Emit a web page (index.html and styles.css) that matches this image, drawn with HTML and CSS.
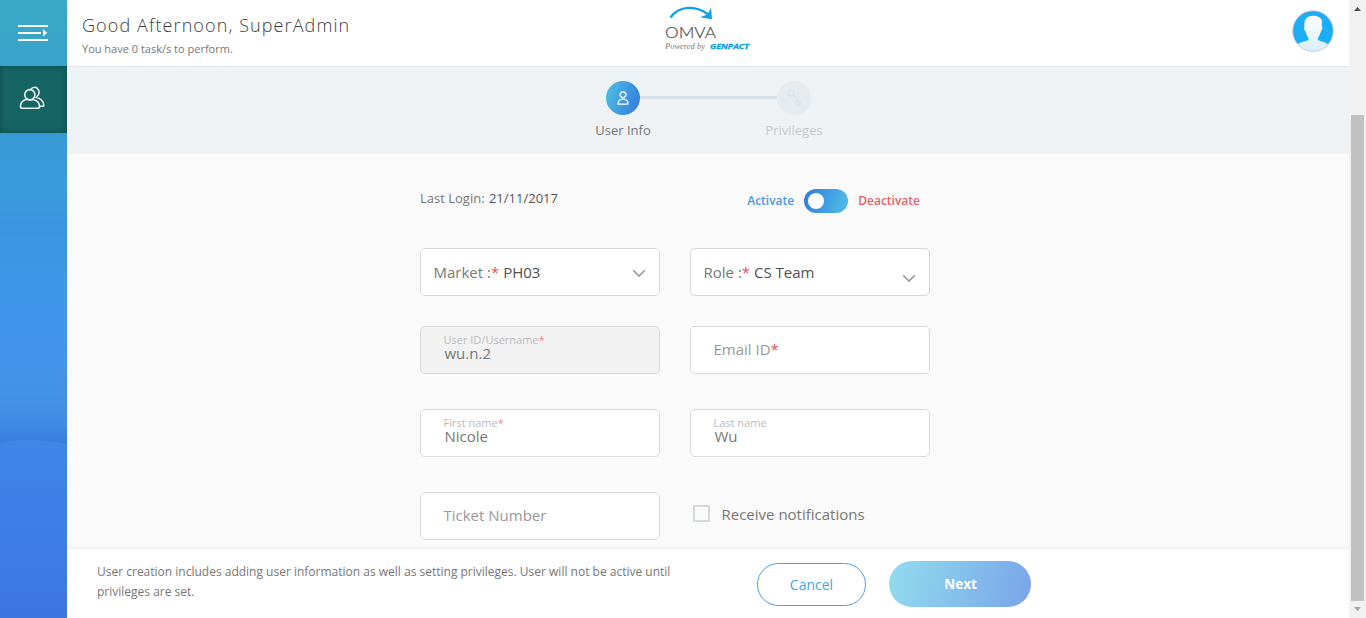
FILE: index.html
```html
<!DOCTYPE html>
<html lang="en">
<head>
<meta charset="utf-8">
<title>OMVA - User Info</title>
<link rel="stylesheet" href="styles.css">
</head>
<body>
<div class="app">
  <nav class="sidebar">
    <svg class="side-bg" width="67" height="618" viewBox="0 0 67 618">
      <defs>
        <linearGradient id="sky" x1="0" y1="0" x2="0" y2="1">
          <stop offset="0" stop-color="#38aac4"/><stop offset=".107" stop-color="#38a2cc"/>
          <stop offset=".22" stop-color="#389ad5"/><stop offset=".31" stop-color="#3a9cdc"/>
          <stop offset=".36" stop-color="#3c94e0"/><stop offset=".46" stop-color="#3f97ea"/>
          <stop offset=".55" stop-color="#4394ee"/><stop offset=".64" stop-color="#4591e9"/>
          <stop offset=".69" stop-color="#3f8ae4"/><stop offset=".715" stop-color="#387ddd"/>
        </linearGradient>
        <linearGradient id="hill" x1="0" y1="0" x2="0" y2="1">
          <stop offset="0" stop-color="#3e86e8"/><stop offset=".5" stop-color="#3d7ee7"/><stop offset="1" stop-color="#3c76e1"/>
        </linearGradient>
      </defs>
      <rect width="67" height="618" fill="url(#sky)"/>
      <path d="M0 442Q32 437 67 444V618H0Z" fill="url(#hill)"/>
    </svg>
    <div class="menu-toggle">
      <svg width="30" height="17" viewBox="0 0 30 17" fill="#fff"><path d="M0 0h30v2H0zM0 7h23v2H0zM0 14h30v2H0zM25 4.3l4.3 3.5L25 11.5z"/></svg>
    </div>
    <div class="side-item">
      <svg width="26" height="24" viewBox="0 0 26 24" fill="none" stroke="#e9f3f3" stroke-width="1.6" stroke-linejoin="round">
        <circle cx="10.8" cy="8.700" r="5.100"/>
        <path d="M7.500 13.200C3.200 14.300 1.500 17 1.500 20.500q0 1.800 1.800 1.800h15.400q1.800 0 1.800-1.800c0-3.500-2-6-6.200-7.100M7.500 13.200Q11 14.600 14.300 13.400M11.500 3.400C13.500 1 16.500.9 18.300 2.300c2.800 2.300 2.200 6.700-.7 8.400M16.200 11.300c5.200.5 8.600 3.900 8.600 8.200q0 .8-1 .8h-3"/>
      </svg>
    </div>
  </nav>
  <main class="main">
    <header class="header">
      <div class="greeting">
        <h1 class="hello">Good Afternoon, SuperAdmin</h1>
        <p class="tasks">You have 0 task/s to perform.</p>
      </div>
      <svg class="logo" width="90" height="50" viewBox="0 0 90 50">
        <path d="M5.500 15.500C14 3.500 31 3 43 12.500" fill="none" stroke="#0aa1e8" stroke-width="2.300"/>
        <path d="M46 5.500L47 17.300L35 15.300L42.500 12.500Z" fill="#0aa1e8"/>
        <text class="logo-name" x="0" y="36" textLength="51" lengthAdjust="spacingAndGlyphs">OMVA</text>
        <text class="logo-by" x="0" y="46.500" textLength="40" lengthAdjust="spacingAndGlyphs">Powered by</text>
        <text class="logo-brand" x="45" y="46.500" textLength="39" lengthAdjust="spacingAndGlyphs">GENPACT</text>
      </svg>
      <svg class="avatar" width="42" height="42" viewBox="0 0 42 42">
        <defs><clipPath id="face"><circle cx="21" cy="21" r="20"/></clipPath>
        <linearGradient id="skin" x1="0" y1="0" x2="0" y2="1"><stop offset="0" stop-color="#fff"/><stop offset="1" stop-color="#d6effc"/></linearGradient></defs>
        <circle cx="21" cy="21" r="20.300" fill="#1badf6" stroke="#ccc" stroke-width="1"/>
        <path clip-path="url(#face)" fill="url(#skin)" d="M17 6.500C21 5 27.500 5.500 29.500 9.500C30.300 12 30 15 29.800 16.500C31 17 30.300 20 29 21C28.500 24 27 26 26 28C25.500 30.500 27 31 30 31.500C34 32.500 36.500 34 38 37V42H3V37C5 34 8 32.500 12 31.500C15.500 31 17 30.500 16.500 28C15 26 14 24 13.500 21C12 20 11.500 17.500 12.500 16.500C12 12 13 8 17 6.500Z"/>
      </svg>
    </header>
    <section class="steps">
      <div class="step">
        <div class="step-dot active">
          <svg width="12" height="14" viewBox="0 0 12 14" fill="none" stroke="#fff" stroke-width="1.3"><circle cx="6" cy="3.700" r="2.900"/><path d="M1 13.100C1 9.800 3 8.200 6 8.200S11 9.800 11 13.100Z" stroke-linejoin="round"/></svg>
        </div>
        <span class="step-label">User Info</span>
      </div>
      <div class="step-line"></div>
      <div class="step pending">
        <div class="step-dot">
          <svg width="15" height="18" viewBox="0 0 15 18" fill="none" stroke="#d9e4ec" stroke-width="1.500"><circle cx="4" cy="4" r="3"/><path d="M6 6.200L14 14.500M10.700 11.300L8.500 13.500M13.500 14L10.700 16.800"/></svg>
        </div>
        <span class="step-label">Privileges</span>
      </div>
    </section>
    <section class="form">
      <div class="meta">
        <div class="last-login">Last Login: <span>21/11/2017</span></div>
        <div class="status"><span class="on">Activate</span><i class="switch"></i><span class="off">Deactivate</span></div>
      </div>
      <div class="field select"><span class="sel-text">Market :<b>*</b> <em>PH03</em></span>
        <svg width="14" height="9" viewBox="0 0 14 9"><path d="M1.200 1.300L7 7.100L12.800 1.300"/></svg></div>
      <div class="field select low"><span class="sel-text">Role :<b>*</b> <em>CS Team</em></span>
        <svg width="14" height="9" viewBox="0 0 14 9"><path d="M1.200 1.300L7 7.100L12.800 1.300"/></svg></div>
      <div class="field disabled"><label>User ID/Username<b>*</b></label><span class="value">wu.n.2</span></div>
      <div class="field"><span class="holder">Email ID<b>*</b></span></div>
      <div class="field"><label>First name<b>*</b></label><span class="value">Nicole</span></div>
      <div class="field"><label>Last name</label><span class="value">Wu</span></div>
      <div class="field"><span class="holder">Ticket Number</span></div>
      <div class="check"><i class="box"></i><span>Receive notifications</span></div>
    </section>
    <footer class="footer">
      <p class="note">User creation includes adding user information as well as setting privileges. User will not be active until<br>privileges are set.</p>
      <div class="btn cancel"><span>Cancel</span></div>
      <div class="btn next"><span>Next</span></div>
    </footer>
  </main>
  <div class="scrollbar">
    <svg class="arrow" width="7" height="4" viewBox="0 0 7 4" fill="#505050"><path d="M0 4L3.500 0L7 4Z"/></svg>
    <div class="thumb"></div>
    <svg class="arrow" width="7" height="4" viewBox="0 0 7 4" fill="#a3a3a3"><path d="M0 0L3.500 4L7 0Z"/></svg>
  </div>
</div>
</body>
</html>
```
FILE: styles.css
```css
* { box-sizing: border-box; }
body { margin: 0; overflow: hidden; font-family: "Open Sans", "Noto Sans", sans-serif; color: #777; }
h1, p { margin: 0; font-weight: 400; }
b, em, i { font-style: normal; font-weight: 400; }
b { color: #ea5156; }
svg { display: block; }
.app { display: flex; width: 1366px; height: 618px; white-space: nowrap; }
.sidebar { position: relative; width: 67px; flex: none; }
.side-bg { position: absolute; left: 0; top: 0; }
.menu-toggle { position: relative; height: 66px; padding: 25px 0 0 18px; }
.side-item { position: relative; height: 67px; padding: 20px 0 0 19px; background: #166464; box-shadow: inset 0 0 6px #0c4c4c; }
.main { width: 1282px; flex: none; display: flex; flex-direction: column; background: #fafafa; }

.header { height: 67px; flex: none; display: flex; background: #fff; border-bottom: 1px solid #e4e6e8; padding-left: 15px; }
.greeting { width: 583px; padding-top: 13px; }
.hello { font-size: 18px; line-height: 25px; font-weight: 300; letter-spacing: 1.1px; color: #3c3c3c; }
.tasks { font-size: 11px; line-height: 16px; margin-top: 3px; color: #777; }
.logo { margin-top: 2px; }
.logo-name { font: 300 16px Lato, sans-serif; fill: #555; stroke: #555; stroke-width: .25; }
.logo-by { font: italic 9px "Liberation Serif", serif; fill: #777; }
.logo-brand { font: italic 700 7.5px "Open Sans", sans-serif; fill: #0aa1e8; stroke: #0aa1e8; stroke-width: .3; }
.avatar { margin: 10px 15px 0 auto; }

.steps { height: 87px; flex: none; display: flex; justify-content: center; padding: 14px 0 0 1px; background: #eef2f5; }
.step { width: 34px; display: flex; flex-direction: column; align-items: center; }
.step-dot { width: 34px; height: 34px; border-radius: 50%; background: #e6ebef; display: flex; align-items: center; justify-content: center; }
.step-dot.active { background: linear-gradient(110deg, #50c2e2, #3378de); }
.step-line { width: 137px; height: 3px; margin-top: 15px; background: #d6e0e8; }
.step-label { margin-top: 6px; font-size: 13px; line-height: 18px; color: #777; }
.pending .step-label { color: #c5c9cc; }

.form { width: 510px; height: 394px; flex: none; margin-left: 353px; display: grid; grid-template-columns: 240px 240px; column-gap: 30px; grid-template-rows: 94px 78px 83px 83px 48px; align-content: start; }
.meta { grid-column: 1 / 3; display: flex; justify-content: space-between; }
.last-login { padding-top: 35px; font-size: 13px; line-height: 18px; }
.last-login span { margin-left: 1px; color: #555; }
.status { display: flex; align-items: center; height: 24px; margin: 35px 10px 0 0; font-size: 12px; line-height: 16px; font-weight: 600; }
.on { color: #4a98e2; }
.off { color: #e0636b; }
.switch { width: 44px; height: 24px; border-radius: 12px; margin: 0 10px; background: linear-gradient(110deg, #3179de, #50c2e6); padding: 4px; }
.switch::before { content: ""; display: block; width: 16px; height: 16px; border-radius: 50%; background: #fff; }

.field { height: 48px; border: 1px solid #d9d9d9; border-radius: 5px; background: #fff; padding: 6px 22.5px 0; font-size: 15px; }
.field.select { display: flex; justify-content: space-between; padding: 0 13px 0 12.5px; }
.sel-text { line-height: 46px; }
.sel-text em { color: #4f4f4f; }
.select svg { margin-top: 20px; fill: none; stroke: #999; stroke-width: 1.600; }
.low svg { margin-top: 25px; }
.disabled { background: #f2f2f2; }
.field label { display: block; font-size: 11px; line-height: 13px; color: #bbb; }
.field label b { color: #f58a8a; }
.value { display: block; margin-left: 1px; line-height: 14px; }
.holder { display: block; line-height: 32px; color: #999; }
.check { display: flex; align-items: flex-start; padding: 12px 0 0 3px; font-size: 15px; line-height: 20px; }
.check .box { margin-top: 1px; }
.box { width: 17px; height: 17px; margin-right: 11.5px; border: 2px solid #d3dada; }

.footer { height: 70px; flex: none; background: #fff; border-top: 1px solid #f0f0f0; box-shadow: 0 -1px 2px #f0f0f0; display: flex; padding-left: 30px; }
.note { width: 660px; padding-top: 13px; font-size: 12px; line-height: 20px; }
.btn { display: flex; align-items: center; justify-content: center; border-radius: 23px; }
.cancel { width: 109px; height: 43px; margin-top: 14px; border: 1px solid #489fe0; color: #489fe0; font-size: 14px; }
.next { width: 142px; height: 46px; margin: 12px 0 0 23px; padding: 0 0 0 1px; background: linear-gradient(105deg, #92dcee, #79a4e9); color: #fff; font-size: 13.5px; font-weight: 700; }

.scrollbar { width: 17px; background: #f1f1f1; display: flex; flex-direction: column; align-items: center; justify-content: space-between; padding: 7px 0; }
.thumb { width: 13px; height: 486px; margin-top: 98px; background: #c1c1c1; }
```
